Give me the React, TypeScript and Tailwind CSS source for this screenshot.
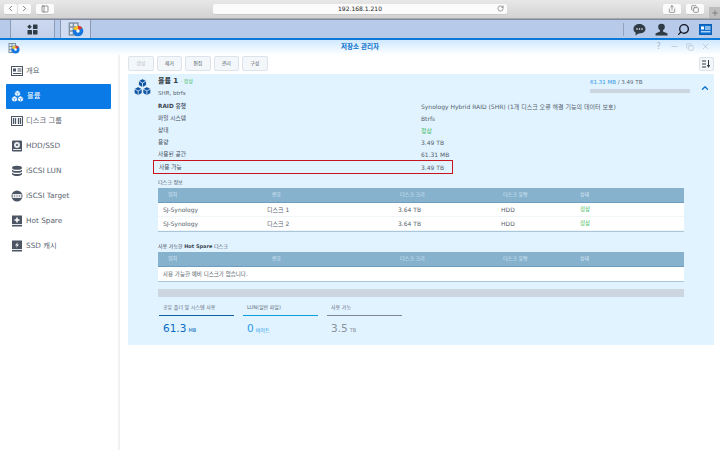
import type { ReactNode } from 'react';
import { ChevronLeft, ChevronRight, ChevronUp, RotateCw, Share, Copy, Plus, PanelLeft, Minus, X, Search } from 'lucide-react';

const font = { fontFamily: '"DejaVu Sans", "Noto Sans CJK KR", sans-serif' };

// cube stack used for the volume icon
const Cubes = ({ size, color, line = '#ffffff' }: { size: number; color: string; line?: string }) => (
  <svg width={size} height={size} viewBox="0 0 24 24">
    <g fill={color} stroke={line} strokeWidth="0.9" strokeLinejoin="round">
      <path d="M12 1l5 2.6v5.6L12 12 7 9.2V3.6z" />
      <path d="M6.5 11l5 2.7v5.6l-5 2.7-5-2.7v-5.6z" />
      <path d="M17.5 11l5 2.7v5.6l-5 2.7-5-2.7v-5.6z" />
      <path d="M7 3.6l5 2.7 5-2.7M12 6.3V12M1.500 13.700l5 2.700 5-2.700M6.500 16.400V22M12.500 13.700l5 2.700 5-2.700M17.500 16.400V22" fill="none" />
    </g>
  </svg>
);

// storage manager app logo
const AppLogo = ({ size }: { size: number }) => (
  <svg width={size} height={size} viewBox="0 0 24 24">
    <rect x="1" y="2" width="15" height="20" fill="#7d8fa3" />
    <path d="M3 4h4v4H3zM9 4h5v4H9zM3 10h4v4H3zM3 16h4v4H3z" fill="#dfe6ee" />
    <circle cx="15" cy="15" r="8" fill="#1577e0" />
    <path d="M15 15V7a8 8 0 0 1 6.500 3.300z" fill="#e23b2e" />
    <path d="M15 15l-7.600-2.500A8 8 0 0 1 15 7z" fill="#f6c12c" />
    <circle cx="15" cy="15" r="2.500" fill="#ffffff" />
  </svg>
);

const icons: Record<string, ReactNode> = {
  overview: (
    <svg width="12" height="12" viewBox="0 0 12 12">
      <rect x="0.500" y="1.500" width="11" height="9" fill="#fff" stroke="#4b5563" />
      <rect x="2" y="3.500" width="3" height="3" fill="#4b5563" />
      <path d="M6.500 4h4M6.500 6h4M2 8.500h8.500" stroke="#4b5563" />
    </svg>
  ),
  volume: <Cubes size={13} color="#ffffff" line="#0a7be6" />,
  group: (
    <svg width="12" height="12" viewBox="0 0 12 12">
      <rect x="0.500" y="1.500" width="11" height="9" fill="#fff" stroke="#4b5563" />
      <path d="M2.500 3v6M4.500 3v6M7.500 3v6M9.500 3v6" stroke="#4b5563" strokeWidth="1.300" />
    </svg>
  ),
  hdd: (
    <svg width="12" height="12" viewBox="0 0 12 12">
      <rect x="1" y="0.500" width="10" height="11" rx="1" fill="#4b5563" />
      <circle cx="6" cy="5" r="3" fill="#e5e7eb" />
      <circle cx="6" cy="5" r="1" fill="#4b5563" />
      <path d="M2 9.500h8" stroke="#e5e7eb" />
    </svg>
  ),
  lun: (
    <svg width="12" height="12" viewBox="0 0 12 12">
      <ellipse cx="6" cy="2.800" rx="5" ry="2" fill="#4b5563" />
      <path d="M1 4.500c1 2 9 2 10 0v1.800c-1 2-9 2-10 0z" fill="#4b5563" />
      <path d="M1 7.500c1 2 9 2 10 0v1.800c-1 2.400-9 2.400-10 0z" fill="#4b5563" />
    </svg>
  ),
  target: (
    <svg width="12" height="12" viewBox="0 0 12 12">
      <circle cx="6" cy="6" r="5.500" fill="#4b5563" />
      <rect x="1.500" y="4" width="9" height="4" fill="#e5e7eb" />
      <path d="M3 6h1M5.500 6h1M8 6h1" stroke="#4b5563" />
    </svg>
  ),
  spare: (
    <svg width="12" height="12" viewBox="0 0 12 12">
      <rect x="1" y="0.500" width="10" height="11" fill="#4b5563" />
      <path d="M6 2.500v5M3.500 5h5" stroke="#fff" strokeWidth="1.500" />
      <path d="M1 9.500h10" stroke="#e5e7eb" />
    </svg>
  ),
  ssd: (
    <svg width="12" height="12" viewBox="0 0 12 12">
      <rect x="1" y="0.500" width="10" height="11" fill="#4b5563" />
      <path d="M7 2L4 5.500h2L5 8l3-3.500H6z" fill="#fff" />
      <path d="M1 9.500h10" stroke="#e5e7eb" />
    </svg>
  ),
};

const navItems = [
  { key: 'overview', label: '개요' },
  { key: 'volume', label: '볼륨', active: true },
  { key: 'group', label: '디스크 그룹' },
  { key: 'hdd', label: 'HDD/SSD' },
  { key: 'lun', label: 'iSCSI LUN' },
  { key: 'target', label: 'iSCSI Target' },
  { key: 'spare', label: 'Hot Spare' },
  { key: 'ssd', label: 'SSD 캐시' },
];

const infoRows = [
  { label: 'RAID 유형', value: 'Synology Hybrid RAID (SHR) (1개 디스크 오류 해결 기능의 데이터 보호)', bold: true },
  { label: '파일 시스템', value: 'Btrfs' },
  { label: '상태', value: '정상', green: true },
  { label: '용량', value: '3.49 TB' },
  { label: '사용된 공간', value: '61.31 MB' },
];

const SafariBtn = ({ children, className }: { children: ReactNode; className: string }) => (
  <div className={`h-[11px] flex items-center justify-center bg-[#fbfbfb] rounded-[2px] border-b border-[#c8c8c8] ${className}`}>
    {children}
  </div>
);

const TableHead = () => (
  <div className="grid grid-cols-[104px_131px_103px_79px_1fr] h-[15px] items-center bg-[#87b2ce] border-b border-[#6f9dbd] text-[5px] text-[#dcebf5] px-[5px]">
    <span className="pl-[5px]">위치</span>
    <span className="pl-[5px]">번호</span>
    <span className="pl-[2px]">디스크 크기</span>
    <span className="pl-[2px]">디스크 유형</span>
    <span>상태</span>
  </div>
);

const DiskRow = ({ num }: { num: string }) => (
  <div className="grid grid-cols-[104px_131px_103px_79px_1fr] h-[14px] items-center bg-white border-b border-[#f0f5f8] px-[5px] text-[6px] text-[#555f6b]">
    <span>SJ-Synology</span>
    <span>{num}</span>
    <span>3.64 TB</span>
    <span>HDD</span>
    <span className="text-[5.500px] text-[#3cb95a]">정상</span>
  </div>
);

const Stat = ({ label, value, unit, line, color, unitColor }: { label: string; value: string; unit: string; line: string; color: string; unitColor: string }) => (
  <div className="w-[75px]">
    <div className={`h-[17px] pl-[4px] pt-[5px] text-[5px] text-[#5f6b78] border-b ${line}`}>{label}</div>
    <div className="pl-[4px] pt-[4px] flex items-baseline gap-[2px]">
      <span className={`text-[10.500px] leading-[16px] ${color}`}>{value}</span>
      <span className={`text-[5px] ${unitColor}`}>{unit}</span>
    </div>
  </div>
);

export default function App() {
  return (
    <div className="w-[720px] h-[450px] overflow-hidden bg-white flex flex-col" style={font}>
      {/* Safari toolbar */}
      <div className="h-[19px] shrink-0 flex items-center pl-[4px] bg-gradient-to-b from-[#e8e8e8] to-[#d2d2d2] border-b border-[#a9a9a9]">
        <div className="flex items-center w-[209px] gap-[5px]">
          <div className="flex gap-[1px]">
            <SafariBtn className="w-[13px]"><ChevronLeft size={9} color="#555" /></SafariBtn>
            <SafariBtn className="w-[13px]"><ChevronRight size={9} color="#555" /></SafariBtn>
          </div>
          <SafariBtn className="w-[18px]"><PanelLeft size={8} color="#666" /></SafariBtn>
        </div>
        <div className="relative w-[294px] h-[11px] flex items-center justify-center bg-[#fbfbfb] rounded-[2px] border-b border-[#c8c8c8] text-[6px] text-[#222]">
          192.168.1.210
          <RotateCw size={7} color="#666" className="absolute right-[3px]" />
        </div>
        <div className="flex items-center gap-[5px] h-full ml-auto">
          <SafariBtn className="w-[18px]"><Share size={8} color="#666" /></SafariBtn>
          <SafariBtn className="w-[18px]"><Copy size={8} color="#666" /></SafariBtn>
          <div className="w-[11px] h-[11px] mt-[7px] flex items-center justify-center bg-[#bdbdbd]"><Plus size={8} color="#666" /></div>
        </div>
      </div>

      {/* DSM taskbar */}
      <div className="h-[19px] shrink-0 flex items-stretch justify-between bg-[#b8caea] border-t border-[#7c8aa6] pl-[10px] pr-[8px]">
        <div className="flex gap-[5px]">
          <div className="w-[45px] flex items-center justify-center bg-gradient-to-b from-[#cdd9f0] to-[#c3d0ea] border-x border-[#8d9ab4]">
            <svg width="11" height="11" viewBox="0 0 11 11" fill="#2f3b45">
              <path d="M2.500 0.500l2.300 2.300-2.300 2.300L0.200 2.800z" />
              <rect x="6" y="0.500" width="4.500" height="4.500" rx="0.500" />
              <rect x="0.500" y="6" width="4.500" height="4.500" rx="0.500" />
              <rect x="6" y="6" width="4.500" height="4.500" rx="0.500" />
            </svg>
          </div>
          <div className="w-[31px] flex items-center justify-center bg-[#d0dcf2] border-x border-[#8d9ab4]">
            <AppLogo size={16} />
          </div>
        </div>
        <div className="flex items-center">
          <div className="w-px h-[13px] bg-[#93a3bf] mr-[9px]" />
          <div className="flex items-center gap-[9px]">
            <svg width="13" height="13" viewBox="0 0 13 13">
              <path d="M6.500 1C3 1 .5 3 .5 6c0 1.700.9 3 2.200 3.800L2.500 12.500l3-2.100h1c3.500 0 6-1.900 6-4.400S10 1 6.500 1z" fill="#2f3b45" />
              <circle cx="4" cy="6" r="0.800" fill="#fff" /><circle cx="6.500" cy="6" r="0.800" fill="#fff" /><circle cx="9" cy="6" r="0.800" fill="#fff" />
            </svg>
            <svg width="13" height="13" viewBox="0 0 13 13" fill="#2f3b45">
              <circle cx="6.500" cy="4" r="3.300" />
              <path d="M5 7h3v1.500l4.500 2V12.500H.5V10.500L5 8.500z" />
            </svg>
            <Search size={13} color="#111827" strokeWidth={2.500} className="-scale-x-100" />
            <svg width="13" height="11" viewBox="0 0 13 11">
              <rect x="0.500" y="0.500" width="12" height="10" fill="#0a6fd0" stroke="#0a5fb4" />
              <rect x="2" y="2.500" width="3" height="3" fill="#fff" />
              <path d="M6 3h5.500M6 5h5.500M2 7.800h9.500" stroke="#fff" />
            </svg>
          </div>
        </div>
      </div>

      {/* window title */}
      <div className="relative h-[17px] shrink-0 flex items-center justify-center bg-gradient-to-b from-[#cfe9ff] to-white border-t-2 border-[#0b7ad6] text-[6.500px] font-bold text-[#0a73cc]">
        <div className="absolute left-[8px] top-[2px]"><AppLogo size={12} /></div>
        저장소 관리자
        <div className="absolute right-[10px] top-[2px] flex items-center gap-[7px] text-[#a9b3bc]">
          <span className="w-[9px] text-center text-[8px] leading-[9px] font-normal">?</span>
          <Minus size={9} strokeWidth={1.500} />
          <Copy size={8} strokeWidth={1.500} />
          <X size={9} strokeWidth={1.500} />
        </div>
      </div>

      <div className="flex flex-1 min-h-0">
        {/* sidebar */}
        <div className="w-[120px] shrink-0 border-r-2 border-[#f1f2f3] pt-[3.500px] pl-[6px] pr-[7px]">
          {navItems.map((n) => (
            <div key={n.key} className={`h-[25px] flex items-center gap-[3px] pl-[5px] text-[7.300px] ${n.active ? 'bg-[#0a7be6] text-white rounded-[1px]' : 'text-[#5a6470]'}`}>
              {icons[n.key]}
              <span>{n.label}</span>
            </div>
          ))}
        </div>

        {/* main */}
        <div className="flex-1 pl-[8px] pr-[6px] pt-[1px]">
          <div className="flex justify-between items-center h-[15px] mb-[3px]">
            <div className="flex gap-[3px] text-[5px]">
              {['생성', '제거', '편집', '관리', '구성'].map((b, i) => (
                <div key={b} className={`w-[25.500px] h-[15px] flex items-center justify-center rounded-[2px] bg-[#f4f7fa] border border-[#dbe4ec] ${i === 0 ? 'text-[#b5bec8]' : 'text-[#4c5763]'}`}>{b}</div>
              ))}
            </div>
            <div className="w-[15px] h-[14px] flex items-center justify-center rounded-[2px] bg-[#f4f7fa] border border-[#dbe4ec]">
              <svg width="9" height="8" viewBox="0 0 9 8" fill="none" stroke="#2f3b45">
                <path d="M0 1h4M0 4h4M0 7h4M6.500 0v6" />
                <path d="M4.800 5h3.400L6.500 8z" fill="#2f3b45" stroke="none" />
              </svg>
            </div>
          </div>

          <div className="h-[271px] bg-[#e1f3ff]">
            <div className="flex h-[26px]">
              <div className="w-[30px] pl-[5px] pt-[4px]"><Cubes size={19} color="#0d56a6" /></div>
              <div className="w-[432px] pt-[3px] text-[#555f6b]">
                <div className="text-[7px] leading-[9px] font-bold text-[#2f3b45]">볼륨 1 <span className="font-normal text-[5px] text-[#3cb95a]">· 정상</span></div>
                <div className="text-[5.500px] leading-[10px] mt-[2px]">SHR, btrfs</div>
              </div>
              <div className="w-[100px] pt-[4px]">
                <div className="text-[5.500px] leading-[8px] text-[#5a6470]"><span className="text-[#2f96e8]">61.31 MB</span> / 3.49 TB</div>
                <div className="h-[4px] mt-[3px] bg-[#cbd6e1]" />
              </div>
              <div className="flex-1 pl-[10px] pt-[9px]"><ChevronUp size={10} color="#0a73cc" strokeWidth={3} /></div>
            </div>

            <div className="pl-[30px] text-[5.700px] text-[#555f6b]">
              {infoRows.map((r) => (
                <div key={r.label} className="flex items-center h-[12px]">
                  <span className={`w-[263px] text-[#3c4652] ${r.bold ? 'font-bold' : ''}`}>{r.label}</span>
                  <span className={`text-[6px] ${r.green ? 'text-[#3cb95a]' : ''}`}>{r.value}</span>
                </div>
              ))}
              <div className="flex items-center h-[14px] w-[300px] -ml-[5px] pl-[5px] border border-[#c8141e]">
                <span className="w-[262px] text-[#3c4652]">사용 가능</span>
                <span className="text-[6px]">3.49 TB</span>
              </div>
            </div>

            <div className="px-[30px] mt-[4px]">
              <div className="text-[5px] leading-[9px] text-[#3c4652] mb-[1px]">디스크 정보</div>
              <div className="border-b border-[#a9c6db]">
                <TableHead />
                <DiskRow num="디스크 1" />
                <DiskRow num="디스크 2" />
              </div>

              <div className="text-[5px] leading-[9px] text-[#3c4652] mt-[10px] mb-[1px]">사용 가능한 <b>Hot Spare</b> 디스크</div>
              <div className="border-b border-[#a9c6db]">
                <TableHead />
                <div className="h-[14px] flex items-center bg-white px-[5px] text-[5.500px] text-[#555f6b]">사용 가능한 예비 디스크가 없습니다.</div>
              </div>

              <div className="h-[8px] bg-[#cbd6e1] mt-[7px]" />

              <div className="flex gap-[9px] pl-[1px] mt-[2px]">
                <Stat label="공유 폴더 및 시스템 사용" value="61.3" unit="MB" line="border-[#0a5fa8]" color="text-[#0a6cc0]" unitColor="text-[#0a6cc0]" />
                <Stat label="LUN(일반 파일)" value="0" unit="바이트" line="border-[#0a9ee0]" color="text-[#2b9be8]" unitColor="text-[#2b9be8]" />
                <Stat label="사용 가능" value="3.5" unit="TB" line="border-[#7d8790]" color="text-[#8a939c]" unitColor="text-[#8a939c]" />
              </div>
            </div>
          </div>
        </div>
      </div>
    </div>
  );
}
